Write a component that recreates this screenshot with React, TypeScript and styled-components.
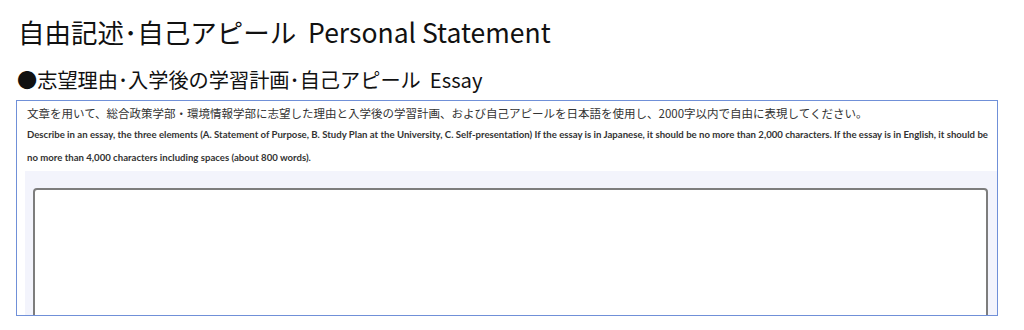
import React from "react";
import styled, { createGlobalStyle } from "styled-components";

const GlobalStyle = createGlobalStyle`
  html, body {
    margin: 0;
    padding: 0;
    background: #ffffff;
  }
  body {
    font-family: "Noto Sans CJK JP", "Noto Sans", sans-serif;
    color: #111;
  }
`;

const Page = styled.div`
  width: 1024px;
  height: 330px;
  overflow: hidden;
  padding: 14px 26px 0 16px;
  box-sizing: border-box;
`;

const Title = styled.h1`
  margin: 0 0 0 2px;
  font-size: 26.5px;
  line-height: 36px;
  font-weight: 400;
  color: #111;
  white-space: pre;
`;

const SubTitle = styled.h2`
  margin: 16px 0 0 1px;
  font-size: 20.2px;
  line-height: 28px;
  font-weight: 400;
  color: #111;
  white-space: pre;
`;

const Box = styled.section`
  margin-top: 6px;
  height: 216px;
  border: 1px solid #7090d8;
  box-sizing: border-box;
  overflow: hidden;
  padding: 4px 0 0 8px;
`;

const Lead = styled.p`
  margin: 0 0 0 2px;
  font-size: 11.5px;
  line-height: 16px;
  color: #333;
`;

const Note = styled.p`
  margin: 2px 9px 0 2px;
  font-family: Lato, "Liberation Sans", sans-serif;
  font-weight: 700;
  font-size: 9.6px;
  line-height: 23px;
  color: #333;
`;

const Panel = styled.div`
  margin-top: 2px;
  background: #f3f4fc;
  padding: 17px 9px 0 8px;
  height: 200px;
`;

const Field = styled.textarea`
  display: block;
  width: 100%;
  height: 200px;
  box-sizing: border-box;
  border: 2px solid #7d7d7d;
  border-radius: 4px;
  background: #fff;
  resize: none;
  outline: none;
`;

export default function App() {
  return (
    <>
      <GlobalStyle />
      <Page>
        <Title>自由記述･自己アピール  Personal Statement</Title>
        <SubTitle>●志望理由･入学後の学習計画･自己アピール  Essay</SubTitle>
        <Box>
          <Lead>
            文章を用いて、総合政策学部・環境情報学部に志望した理由と入学後の学習計画、および自己アピールを日本語を使用し、2000字以内で自由に表現してください。
          </Lead>
          <Note>
            Describe in an essay, the three elements (A. Statement of Purpose, B. Study Plan at the University, C. Self-presentation) If the essay is in Japanese, it should be no more than 2,000 characters. If the essay is in English, it should be no more than 4,000 characters including spaces (about 800 words).
          </Note>
          <Panel>
            <Field aria-label="Essay" />
          </Panel>
        </Box>
      </Page>
    </>
  );
}
